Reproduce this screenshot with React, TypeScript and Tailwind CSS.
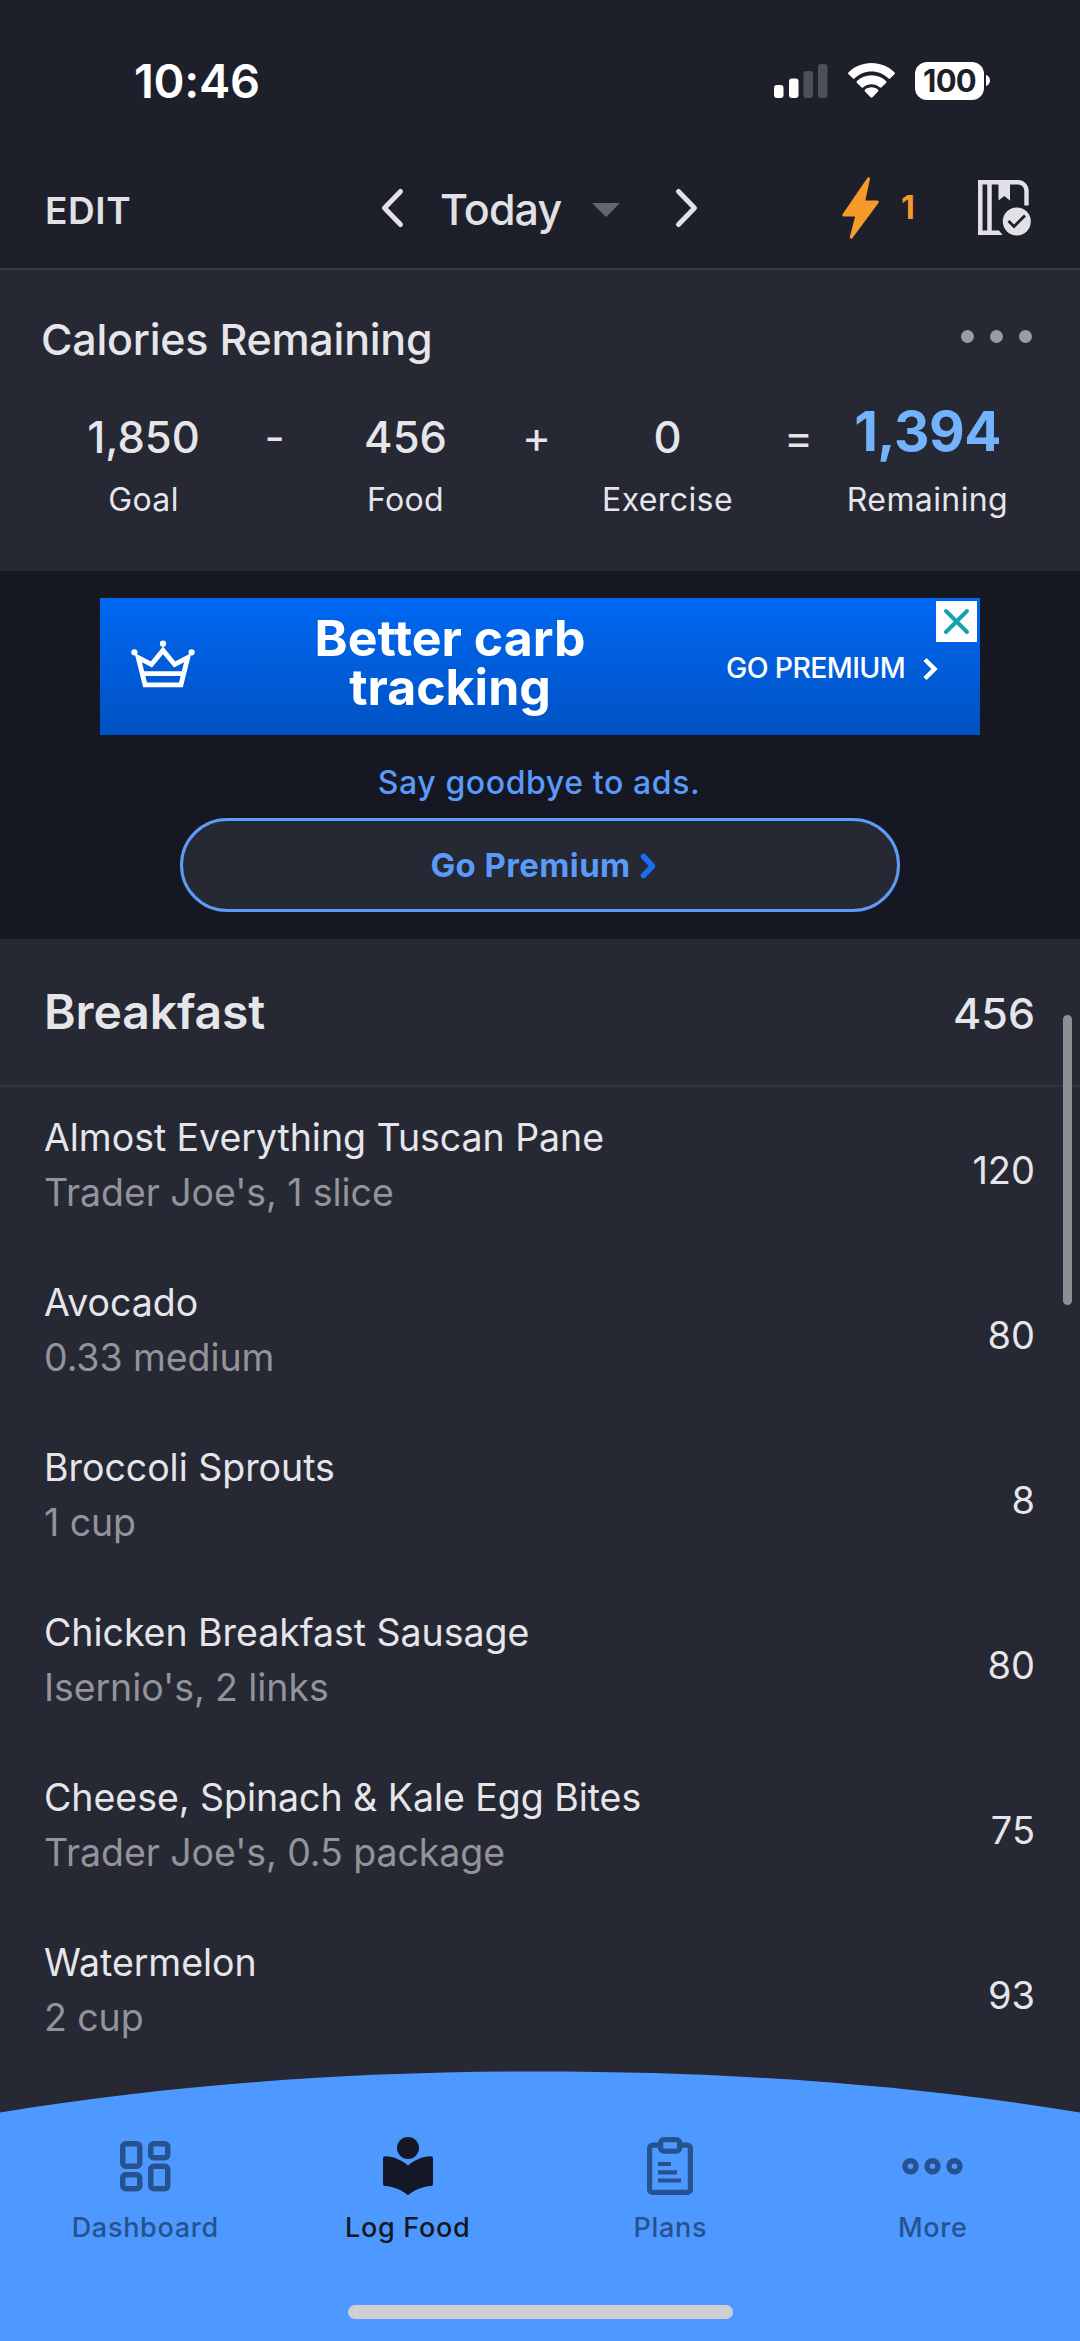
import type { ReactNode } from "react";

const foods = [
  { name: "Almost Everything Tuscan Pane", detail: "Trader Joe's, 1 slice", calories: 120 },
  { name: "Avocado", detail: "0.33 medium", calories: 80 },
  { name: "Broccoli Sprouts", detail: "1 cup", calories: 8 },
  { name: "Chicken Breakfast Sausage", detail: "Isernio's, 2 links", calories: 80 },
  { name: "Cheese, Spinach & Kale Egg Bites", detail: "Trader Joe's, 0.5 package", calories: 75 },
  { name: "Watermelon", detail: "2 cup", calories: 93 },
];

function StatusBar() {
  return (
    <div className="flex h-[152px] items-center justify-between pt-[9px] pr-[90px] pl-[134px] text-white">
      <span className="text-[47px] leading-none font-semibold tracking-[-0.3px]">10:46</span>
      <div className="flex items-center">
        <svg width="54" height="34" viewBox="0 0 54 34" fill="currentColor">
          <rect x="0" y="21" width="9.5" height="13" rx="3" />
          <rect x="15" y="14.5" width="9.5" height="19.5" rx="3" />
          <rect x="29.5" y="7" width="9.5" height="27" rx="3" opacity="0.22" />
          <rect x="44" y="0" width="9.5" height="34" rx="3" opacity="0.22" />
        </svg>
        <svg className="ml-5" width="47" height="35" viewBox="0 0 47 35" fill="currentColor">
          <path d="M23.5 0C32.4 0 40.5 3.5 46.4 9.2a1.4 1.4 0 0 1 0 2L42.3 15.3a1.4 1.4 0 0 1-2 0C35.9 11.1 30 8.5 23.5 8.5S11.1 11.1 6.7 15.3a1.4 1.4 0 0 1-2 0L.6 11.2a1.4 1.4 0 0 1 0-2C6.5 3.5 14.6 0 23.5 0Z" />
          <path d="M23.5 12.2c5.6 0 10.7 2.2 14.5 5.7.6.6.6 1.5 0 2.1l-4.4 4.3c-.6.5-1.4.5-2 0-2.2-1.9-5-3.1-8.1-3.1s-5.9 1.2-8.1 3.1c-.6.5-1.4.5-2 0L9 20c-.6-.6-.6-1.5 0-2.1 3.8-3.5 8.9-5.7 14.5-5.7Z" />
          <path d="M23.5 24.3c2.5 0 4.7.9 6.4 2.3.6.5.6 1.4.1 1.9l-5.500 5.700c-.6.6-1.4.6-2 0L17 28.5c-.5-.5-.5-1.4.1-1.900 1.700-1.400 3.900-2.300 6.400-2.300Z" />
        </svg>
        <div className="ml-5 flex h-[38px] w-[69px] items-center justify-center rounded-[12px] bg-white text-[31px] leading-none font-bold tracking-[-0.8px] text-[#1d1f2a]">
          100
        </div>
        <svg className="ml-0.5" width="4" height="11" viewBox="0 0 4 11" fill="currentColor">
          <path d="M0 0c2.500.8 4 3 4 5.500S2.500 10.200 0 11Z" />
        </svg>
      </div>
    </div>
  );
}

function BookCheckIcon() {
  return (
    <svg width="54" height="56" viewBox="0 0 54 56" fill="none">
      <path d="M2.3 0V55M11.5 2v51" stroke="#e2e2e6" strokeWidth="4.5" />
      <path d="M0 2.2H40a8.500 8.500 0 0 1 8.500 8.500V25.500" stroke="#e2e2e6" strokeWidth="4.400" />
      <path d="M0 55H24.500l-3.500-4.500H0Z" fill="#e2e2e6" />
      <path d="M20.500 3H32V20.500L26.300 16 20.500 20.500Z" fill="#e2e2e6" />
      <circle cx="38.800" cy="41.500" r="14" fill="#e2e2e6" />
      <path d="M30.500 41l5.500 5.500L47 35.500" stroke="#1d1f2a" strokeWidth="2.800" />
    </svg>
  );
}

function Toolbar() {
  return (
    <div className="flex h-[116px] items-center pr-[48px] pl-[43px] text-[#e2e2e6]">
      <span className="w-[337px] pl-[2px] text-[37px] leading-none font-semibold tracking-[0.6px]">EDIT</span>
      <div className="flex w-[320px] items-center">
        <svg className="-mt-1" width="25" height="44" viewBox="0 0 25 44" fill="none" stroke="currentColor" strokeWidth="5" strokeLinecap="round" strokeLinejoin="round">
          <path d="M20.500 5.500 4.500 22l16 16.500" />
        </svg>
        <span className="-mt-0.5 ml-[35px] w-[126px] text-[43px] leading-none font-medium tracking-[-0.9px] whitespace-nowrap">Today</span>
        <svg className="ml-[26px]" width="28" height="14" viewBox="0 0 28 14">
          <path d="M0 0h28L14 14Z" fill="#66676b" />
        </svg>
        <svg className="-mt-1 ml-[54px]" width="25" height="44" viewBox="0 0 25 44" fill="none" stroke="currentColor" strokeWidth="5" strokeLinecap="round" strokeLinejoin="round">
          <path d="M4.500 5.500 20.500 22l-16 16.500" />
        </svg>
      </div>
      <div className="-mt-1 flex flex-1 items-center justify-end text-[#f79a2c]">
        <svg width="37" height="62" viewBox="0 0 37 62" fill="currentColor" stroke="currentColor" strokeWidth="3" strokeLinejoin="round">
          <path d="M26.500 1.800 1.800 38H15L9.300 60.200 35.200 25H21.500Z" />
        </svg>
        <span className="ml-[22px] w-[16px] text-[32px] leading-none font-bold">1</span>
        <div className="ml-[61px]">
          <BookCheckIcon />
        </div>
      </div>
    </div>
  );
}

function Amount({ value, label }: { value: string; label: string }) {
  return (
    <div className="flex w-[180px] flex-col items-center">
      <span className="h-[62px] text-[43.5px] leading-[62px] font-medium">{value}</span>
      <span className="mt-2.5 text-[32px] leading-[44px] tracking-[0.4px]">{label}</span>
    </div>
  );
}

function Operator({ children }: { children: ReactNode }) {
  return <span className="h-[62px] w-[82px] text-center text-[44px] leading-[62px]">{children}</span>;
}

function CalorieSummary() {
  return (
    <section className="h-[303px] border-t-2 border-[#373945] bg-[#262833] pt-[42px] text-[#e5e5ea]">
      <div className="flex h-[54px] items-center justify-between pr-[48px] pl-[41px]">
        <h2 className="text-[43px] leading-none font-medium tracking-[-0.25px] whitespace-nowrap">Calories Remaining</h2>
        <div className="-mt-1.5 flex gap-[16px]">
          <span className="size-[13px] rounded-full bg-[#9b9ca1]" />
          <span className="size-[13px] rounded-full bg-[#9b9ca1]" />
          <span className="size-[13px] rounded-full bg-[#9b9ca1]" />
        </div>
      </div>
      <div className="mt-[40px] flex pl-[53.5px]">
        <Amount value="1,850" label="Goal" />
        <Operator>-</Operator>
        <Amount value="456" label="Food" />
        <Operator>+</Operator>
        <Amount value="0" label="Exercise" />
        <Operator>=</Operator>
        <div className="flex w-[176px] flex-col items-center">
          <span className="h-[50px] text-[55px] leading-[50px] font-bold tracking-[-0.5px] text-[#72b3fc]">1,394</span>
          <span className="mt-[22px] text-[32px] leading-[44px] tracking-[0.4px]">Remaining</span>
        </div>
      </div>
    </section>
  );
}

function PremiumAd() {
  return (
    <section className="flex h-[368px] flex-col items-center bg-[#151722] pt-[27px]">
      <div className="relative flex h-[137px] w-[880px] items-center bg-linear-to-b from-[#0068f3] to-[#0052c2] text-white">
        <svg className="-mt-1.5 ml-[31px]" width="64" height="48" viewBox="0 0 66 49" fill="none" stroke="currentColor" strokeWidth="5">
          <path d="M7.500 18 14.500 46H51.500L58.500 18 45 25 33 10.500 21 25ZM12 34.500H54" />
          <g fill="currentColor" stroke="none">
            <circle cx="33" cy="3.500" r="3.200" />
            <circle cx="3.500" cy="12.500" r="3.200" />
            <circle cx="62.500" cy="12.500" r="3.200" />
          </g>
        </svg>
        <p className="-mt-[7px] ml-[110px] w-[290px] text-center text-[50px] leading-[49px] font-bold whitespace-nowrap">
          Better carb
          <br />
          tracking
        </p>
        <span className="mt-[3px] ml-[131px] w-[182px] text-[28.5px] leading-none font-medium tracking-[-0.65px] whitespace-nowrap">GO PREMIUM</span>
        <svg className="mt-1 ml-[14px]" width="17" height="24" viewBox="0 0 17 24" fill="none" stroke="currentColor" strokeWidth="4.500">
          <path d="M3 2.500 12.500 12 3 21.500" />
        </svg>
        <button className="absolute top-[3px] right-[3px] flex size-[41px] items-center justify-center bg-white">
          <svg width="27" height="27" viewBox="0 0 27 27" stroke="#17a1b3" strokeWidth="4" strokeLinecap="round">
            <path d="M3 3 24 24M24 3 3 24" />
          </svg>
        </button>
      </div>
      <p className="mt-[28px] pr-0.5 text-[32px] leading-[40px] font-medium tracking-[0.6px] text-[#599afa]">Say goodbye to ads.</p>
      <button className="mt-[15px] flex h-[94px] w-[720px] items-center justify-center gap-[9px] rounded-full border-[3px] border-[#5e9bf5] bg-[#262833] pl-[6px] text-[33px] leading-none font-bold tracking-[0.4px] text-[#599afa]">
        Go Premium
        <svg className="mt-0.5" width="16" height="26" viewBox="0 0 16 26" fill="none" stroke="#1b6df2" strokeWidth="5.500" strokeLinecap="round" strokeLinejoin="round">
          <path d="M3.500 3.500 12.500 13 3.500 22.500" />
        </svg>
      </button>
    </section>
  );
}

function Meal() {
  return (
    <section className="relative h-[1402px] bg-[#262833] text-[#e5e5ea]">
      <div className="flex h-[148px] items-center justify-between border-b-2 border-[#32343f] pr-[45px] pl-[44px]">
        <h2 className="text-[48px] leading-none font-semibold tracking-[-0.1px]">Breakfast</h2>
        <span className="mt-0.5 text-[43px] leading-none font-medium">456</span>
      </div>
      <ul className="pt-[23px]">
        {foods.map((food) => (
          <li key={food.name} className="flex h-[165px] items-start justify-between pr-[45px] pl-[44px]">
            <div className="text-[37.5px] leading-[55px] whitespace-nowrap">
              <p className="tracking-[-0.04px]">{food.name}</p>
              <p className="tracking-[-0.08px] text-[#92939b]">{food.detail}</p>
            </div>
            <span className="text-[38px] leading-[120px]">{food.calories}</span>
          </li>
        ))}
      </ul>
      <div className="absolute top-[76px] right-2 h-[290px] w-[9px] rounded-full bg-[#8e8e95]" />
    </section>
  );
}

function DashboardIcon() {
  return (
    <svg width="51" height="51" viewBox="0 0 51 51" fill="none" stroke="currentColor" strokeWidth="5.500">
      <rect x="2.750" y="2.750" width="17" height="22.500" rx="3" />
      <rect x="30.750" y="2.750" width="17" height="14" rx="3" />
      <rect x="2.750" y="33.750" width="17" height="14" rx="3" />
      <rect x="30.750" y="25.250" width="17" height="22.500" rx="3" />
    </svg>
  );
}

function LogFoodIcon() {
  return (
    <svg width="50" height="58" viewBox="0 0 50 58" fill="currentColor">
      <circle cx="25" cy="11" r="11" />
      <path d="M25 28.500C18.500 23 11 19.600 2 19.300a2 2 0 0 0-2 2V47a2 2 0 0 0 2 2c9.500.6 17.500 4.500 23 9.300C30.500 53.500 38.500 49.600 48 49a2 2 0 0 0 2-2V21.300a2 2 0 0 0-2-2C39 19.600 31.500 23 25 28.500Z" />
    </svg>
  );
}

function PlansIcon() {
  return (
    <svg width="46" height="58" viewBox="0 0 46 58" fill="none" stroke="currentColor" strokeWidth="5.200">
      <path d="M13 8.100H5.600a3 3 0 0 0-3 3v41.300a3 3 0 0 0 3 3h34.800a3 3 0 0 0 3-3V11.100a3 3 0 0 0-3-3H33" />
      <rect x="13.600" y="2.600" width="19" height="11.500" rx="3" />
      <path d="M11 27H24M11 35.300H30M11 43.500H34" strokeWidth="4.200" />
    </svg>
  );
}

function MoreIcon() {
  return (
    <svg width="61" height="17" viewBox="0 0 61 17" fill="none" stroke="currentColor" strokeWidth="5.500">
      <circle cx="8.500" cy="8.300" r="5.500" />
      <circle cx="30.500" cy="8.300" r="5.500" />
      <circle cx="52.500" cy="8.300" r="5.500" />
    </svg>
  );
}

const tabs = [
  { label: "Dashboard", icon: <DashboardIcon />, color: "text-[#265290]" },
  { label: "Log Food", icon: <LogFoodIcon />, color: "text-[#141826]" },
  { label: "Plans", icon: <PlansIcon />, color: "text-[#265290]" },
  { label: "More", icon: <MoreIcon />, color: "text-[#265290]" },
];

function TabBar() {
  return (
    <nav className="absolute inset-x-0 bottom-0 h-[270px]">
      <svg className="absolute inset-0" width="1080" height="270" viewBox="0 0 1080 270" fill="#4e99ff">
        <path d="M0 41.500C170 13.500 350 .5 540 .5S910 13.500 1080 41.500V270H0Z" />
      </svg>
      <div className="relative flex pt-[64px] pl-[14px]">
        {tabs.map((tab) => (
          <div key={tab.label} className={`flex w-[262.500px] flex-col items-center ${tab.color}`}>
            <div className="flex h-[62px] items-center">{tab.icon}</div>
            <span className="mt-[13px] text-[27px] leading-[36px] font-medium tracking-[0.7px]">{tab.label}</span>
          </div>
        ))}
      </div>
      <div className="relative mx-auto mt-[59px] h-[14px] w-[385px] rounded-full bg-[#cfcfd1]" />
    </nav>
  );
}

export default function App() {
  return (
    <div className="relative h-[2341px] w-[1080px] overflow-hidden bg-[#1d1f2a] font-[Inter,'Liberation_Sans',sans-serif]">
      <StatusBar />
      <Toolbar />
      <CalorieSummary />
      <PremiumAd />
      <Meal />
      <TabBar />
    </div>
  );
}
